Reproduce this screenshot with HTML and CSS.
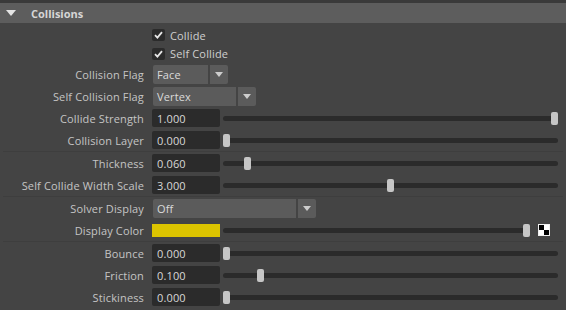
FILE: index.html
```html
<!DOCTYPE html>
<html>
	<head>
		<title>Collisions</title>
		<link rel="stylesheet" href="styles.css">
	</head>
	<body>
		<div class="strip"></div>
		<div class="header">
			<span class="caret"></span>
			<span class="title">Collisions</span>
		</div>
		<div class="group first">
			<div class="check-row">
				<span class="box"><svg width="13" height="12" viewBox="0 0 13 12"><path d="M3 6.2 L5.4 8.6 L10 3.2" fill="none" stroke="#e6e6e6" stroke-width="1.8"/></svg></span>
				<span class="check-label">Collide</span>
			</div>
			<div class="check-row">
				<span class="box"><svg width="13" height="12" viewBox="0 0 13 12"><path d="M3 6.2 L5.4 8.6 L10 3.2" fill="none" stroke="#e6e6e6" stroke-width="1.8"/></svg></span>
				<span class="check-label">Self Collide</span>
			</div>
			<div class="row">
				<label class="label">Collision Flag</label>
				<div class="dropdown">
					<span class="dd-main dd-face">Face</span>
					<span class="dd-arrow"><span class="arrow"></span></span>
				</div>
			</div>
			<div class="row">
				<label class="label">Self Collision Flag</label>
				<div class="dropdown">
					<span class="dd-main dd-vertex">Vertex</span>
					<span class="dd-arrow"><span class="arrow"></span></span>
				</div>
			</div>
			<div class="row">
				<label class="label">Collide Strength</label>
				<span class="field">1.000</span>
				<div class="slider"><span class="thumb" style="left:328px"></span></div>
			</div>
			<div class="row">
				<label class="label">Collision Layer</label>
				<span class="field">0.000</span>
				<div class="slider"><span class="thumb" style="left:0px"></span></div>
			</div>
		</div>
		<div class="sep"></div>
		<div class="group">
			<div class="row">
				<label class="label">Thickness</label>
				<span class="field">0.060</span>
				<div class="slider"><span class="thumb" style="left:21px"></span></div>
			</div>
			<div class="row">
				<label class="label">Self Collide Width Scale</label>
				<span class="field">3.000</span>
				<div class="slider"><span class="thumb" style="left:164px"></span></div>
			</div>
		</div>
		<div class="sep"></div>
		<div class="group">
			<div class="row">
				<label class="label">Solver Display</label>
				<div class="dropdown">
					<span class="dd-main dd-off">Off</span>
					<span class="dd-arrow"><span class="arrow"></span></span>
				</div>
			</div>
			<div class="row">
				<label class="label">Display Color</label>
				<span class="swatch"></span>
				<div class="slider short"><span class="thumb" style="left:300px"></span></div>
				<span class="checker"><i></i><i class="w"></i><i class="w"></i><i></i></span>
			</div>
		</div>
		<div class="sep"></div>
		<div class="group">
			<div class="row">
				<label class="label">Bounce</label>
				<span class="field">0.000</span>
				<div class="slider"><span class="thumb" style="left:0px"></span></div>
			</div>
			<div class="row">
				<label class="label">Friction</label>
				<span class="field">0.100</span>
				<div class="slider"><span class="thumb" style="left:34px"></span></div>
			</div>
			<div class="row">
				<label class="label">Stickiness</label>
				<span class="field">0.000</span>
				<div class="slider"><span class="thumb" style="left:0px"></span></div>
			</div>
		</div>
	</body>
</html>
```

FILE: styles.css
```css
body {
	margin:0;
	background:#444444;
	color:#c4c4c4;
	font-family:"Open Sans", "Liberation Sans", sans-serif;
	font-size:11px;
	letter-spacing:0.15px;
	overflow:hidden;
}
.strip {
	height:3px;
	background:#3a3a3a;
}
.header {
	height:20px;
	background:#5d5d5d;
	display:flex;
	align-items:center;
}
.caret {
	width:0;
	height:0;
	margin-left:6px;
	border-left:5.5px solid transparent;
	border-right:5.5px solid transparent;
	border-top:6px solid #e4e4e4;
}
.title {
	margin-left:15px;
	font-weight:bold;
	letter-spacing:0;
	color:#d6d6d6;
}
.group.first {
	padding-top:3px;
}
.sep {
	height:1px;
	margin:0 3px;
	background:#3e3e3e;
}
.check-row {
	height:18.5px;
	display:flex;
	align-items:center;
	padding-left:152px;
}
.box {
	width:13px;
	height:12px;
	background:#2b2b2b;
	border-radius:2px;
	display:flex;
}
.check-label {
	margin-left:5px;
	color:#cfcfcf;
}
.row {
	height:22px;
	display:flex;
	align-items:center;
}
.label {
	width:144px;
	padding-right:8px;
	text-align:right;
	flex-shrink:0;
}
.field {
	width:63px;
	height:18px;
	line-height:19px;
	padding-left:5px;
	background:#2b2b2b;
	border-radius:2px;
	color:#d8d8d8;
}
.slider {
	position:relative;
	width:335px;
	height:13px;
	margin-left:3px;
}
.slider.short {
	width:307px;
}
.slider::before {
	content:"";
	position:absolute;
	left:0;
	right:0;
	top:4px;
	height:5px;
	border-radius:3px;
	background:#2b2b2b;
}
.thumb {
	position:absolute;
	top:0;
	width:7px;
	height:13px;
	border-radius:2px;
	background:#c6c6c6;
}
.dropdown {
	display:flex;
	height:19px;
	margin-left:1px;
}
.dd-main {
	background:#5b5b5b;
	border-radius:2px 0 0 2px;
	padding-left:4px;
	line-height:20px;
	color:#dadada;
}
.dd-face {
	width:51px;
}
.dd-vertex {
	width:79px;
}
.dd-off {
	width:139px;
}
.dd-arrow {
	width:18px;
	margin-left:2px;
	background:#5b5b5b;
	border-radius:0 2px 2px 0;
	display:flex;
	align-items:center;
	justify-content:center;
}
.arrow {
	width:0;
	height:0;
	border-left:4px solid transparent;
	border-right:4px solid transparent;
	border-top:5px solid #cdcdcd;
}
.swatch {
	width:68px;
	height:13px;
	background:#dcc400;
}
.checker {
	margin-left:8px;
	width:10px;
	height:10px;
	border:1px solid #f0f0f0;
	display:grid;
	grid-template-columns:5px 5px;
	grid-template-rows:5px 5px;
}
.checker i {
	background:#000;
}
.checker i.w {
	background:#fff;
}
```
